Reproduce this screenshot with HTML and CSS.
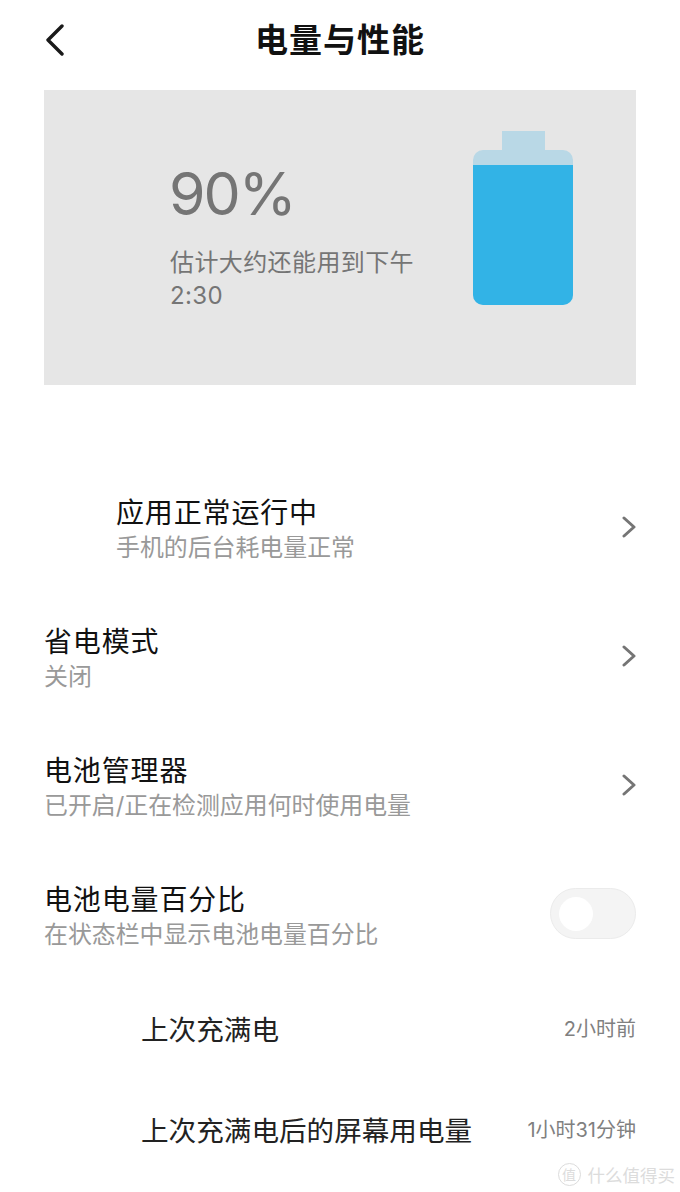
FILE: index.html
```html
<!DOCTYPE html>
<html lang="zh-CN">
<head>
  <meta charset="UTF-8" />
  <meta name="viewport" content="width=device-width, initial-scale=1.0"/>
  <title>电量与性能</title>
  <link rel="stylesheet" href="styles.css">
</head>
<body>
  <div class="page">
    <header class="topbar">
      <svg class="back" width="20" height="32" viewBox="0 0 20 32"><path d="M17 2 L3 16 L17 30" /></svg>
      <h1>电量与性能</h1>
    </header>

    <!-- 电量卡片 -->
    <section class="card">
      <div class="card-text">
        <div class="percent">90%</div>
        <div class="estimate">估计大约还能用到下午<br>2:30</div>
      </div>
      <div class="battery">
        <div class="battery-cap"></div>
        <div class="battery-body">
          <div class="battery-fill"></div>
        </div>
      </div>
    </section>

    <div class="list">
      <div class="row row-indent">
        <div class="row-text">
          <div class="row-title">应用正常运行中</div>
          <div class="row-sub">手机的后台耗电量正常</div>
        </div>
        <svg class="chevron" width="16" height="22" viewBox="0 0 16 22"><path d="M3 2 L13 11 L3 20" /></svg>
      </div>
      <div class="row">
        <div class="row-text">
          <div class="row-title">省电模式</div>
          <div class="row-sub">关闭</div>
        </div>
        <svg class="chevron" width="16" height="22" viewBox="0 0 16 22"><path d="M3 2 L13 11 L3 20" /></svg>
      </div>
      <div class="row">
        <div class="row-text">
          <div class="row-title">电池管理器</div>
          <div class="row-sub">已开启/正在检测应用何时使用电量</div>
        </div>
        <svg class="chevron" width="16" height="22" viewBox="0 0 16 22"><path d="M3 2 L13 11 L3 20" /></svg>
      </div>
      <div class="row">
        <div class="row-text">
          <div class="row-title">电池电量百分比</div>
          <div class="row-sub">在状态栏中显示电池电量百分比</div>
        </div>
        <div class="toggle"><div class="knob"></div></div>
      </div>
    </div>

    <div class="stats">
      <div class="stat">
        <span class="stat-name">上次充满电</span>
        <span class="stat-value">2小时前</span>
      </div>
      <div class="stat">
        <span class="stat-name">上次充满电后的屏幕用电量</span>
        <span class="stat-value">1小时31分钟</span>
      </div>
    </div>

    <div class="watermark"><span class="mark">值</span><span>什么值得买</span></div>
  </div>
</body>
</html>
```

FILE: styles.css
```css
body {
  font-family: Inter, "Noto Sans CJK SC", sans-serif;
  margin: 0;
  background: #fff;
  color: #111;
}

.page {
  position: relative;
  width: 680px;
  height: 1192px;
  overflow: hidden;
  padding: 0 44px;
  box-sizing: border-box;
}

.topbar {
  position: relative;
  height: 90px;
  display: flex;
  align-items: center;
  justify-content: center;
  padding-bottom: 14px;
  box-sizing: border-box;
}

.topbar h1 {
  margin: 0;
  font-size: 33px;
  font-weight: 700;
  letter-spacing: 1px;
}

.back {
  position: absolute;
  left: 1px;
  top: 24px;
}

.back path {
  fill: none;
  stroke: #1a1a1a;
  stroke-width: 3.4;
  stroke-linecap: round;
  stroke-linejoin: round;
}

.card {
  height: 295px;
  background: #e6e6e6;
  display: flex;
  justify-content: space-between;
  padding: 41px 63px 0 126px;
  box-sizing: border-box;
}

.card-text {
  padding-top: 27px;
  color: #757575;
}

.percent {
  margin-left: -1px;
  font-size: 59px;
  line-height: 72px;
  letter-spacing: -2px;
}

.estimate {
  margin-top: 16px;
  font-size: 24px;
  line-height: 33px;
  letter-spacing: 0.4px;
}

.battery {
  width: 100px;
  display: flex;
  flex-direction: column;
  align-items: center;
}

.battery-cap {
  width: 43px;
  height: 19px;
  background: #b9d8e6;
}

.battery-body {
  width: 100%;
  height: 155px;
  padding-top: 15px;
  box-sizing: border-box;
  background: #b9d8e6;
  border-radius: 10px;
  overflow: hidden;
}

.battery-fill {
  height: 100%;
  background: #32b3e6;
}

.list {
  margin-top: 80px;
}

.row {
  height: 129px;
  display: flex;
  align-items: center;
  justify-content: space-between;
}

.row-indent {
  padding-left: 72px;
}

.row-title {
  font-size: 28px;
  line-height: 37px;
  letter-spacing: 0.85px;
}

.row-sub {
  margin-top: -1px;
  font-size: 23.9px;
  line-height: 34px;
  color: #999;
}

.chevron {
  margin-bottom: 6px;
  margin-right: -1px;
}

.chevron path {
  fill: none;
  stroke: #757575;
  stroke-width: 3;
  stroke-linecap: round;
  stroke-linejoin: round;
}

.toggle {
  width: 86px;
  height: 51px;
  border: 1px solid #ebebeb;
  border-radius: 26px;
  background: #f4f4f4;
  box-sizing: border-box;
  display: flex;
  align-items: center;
  padding-left: 8px;
  margin-bottom: 6px;
}

.knob {
  width: 34px;
  height: 34px;
  border-radius: 50%;
  background: #fff;
}

.stats {
  margin-top: -4px;
}

.stat {
  height: 101px;
  display: flex;
  align-items: center;
  justify-content: space-between;
  padding-left: 97px;
}

.stat-name {
  font-size: 27.6px;
  color: #222;
}

.stat-value {
  font-size: 20px;
  color: #808080;
}

.watermark {
  position: absolute;
  right: 5px;
  bottom: 5px;
  display: flex;
  align-items: center;
  gap: 7px;
  font-size: 17.5px;
  color: #dcdcdc;
}

.mark {
  width: 21px;
  height: 21px;
  border: 1px solid #dcdcdc;
  border-radius: 50%;
  font-size: 14px;
  line-height: 21px;
  text-align: center;
}
```
